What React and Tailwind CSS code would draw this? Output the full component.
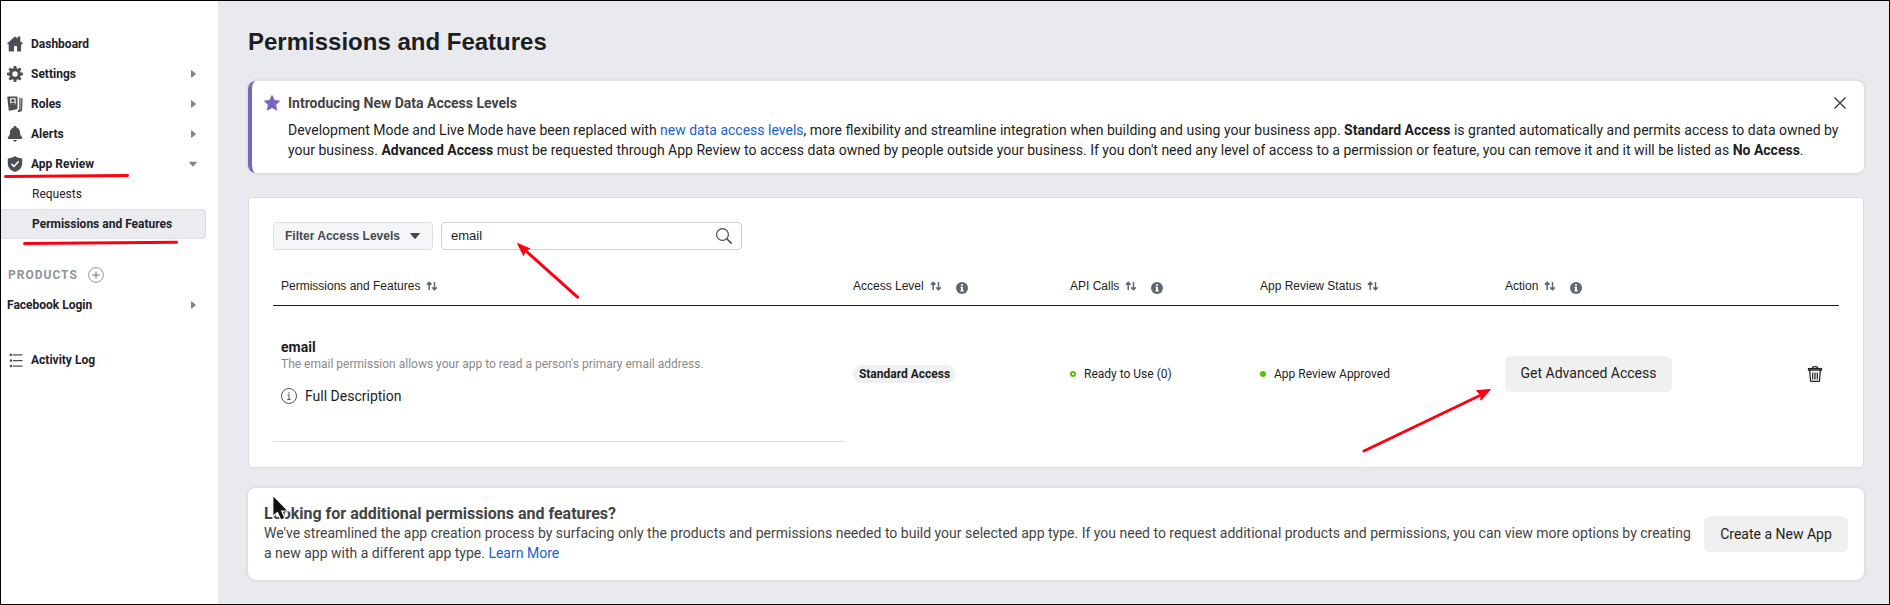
import React from "react";

const roboto = "font-[Roboto,'Liberation_Sans',sans-serif]";
const arial = "font-['Liberation_Sans',Arial,sans-serif]";

function HouseIcon() {
  return (
    <svg className="size-4" viewBox="0 0 16 16" fill="#4b4f56">
      <path d="M.4 7.2 7 1.200c.6-.5 1.300-.5 1.900 0l1.600 1.400V1.200c0-.4.2-.6.6-.6h1.600c.4 0 .6.2.6.6v4l2.300 2.100c.4.4.1.9-.4.9h-1.100v6.600c0 .4-.3.7-.7.7H10V10.500c0-.3-.2-.5-.5-.5h-2c-.3 0-.5.2-.5.5v5H2.400c-.4 0-.7-.3-.7-.7V8.200H.8c-.5 0-.8-.6-.4-1Z" />
    </svg>
  );
}

function GearIcon() {
  const teeth = [0, 45, 90, 135, 180, 225, 270, 315];
  return (
    <svg className="size-4" viewBox="0 0 16 16">
      {teeth.map((a) => (
        <path key={a} d="M6.200 3.500 6.700.3C6.700.1 6.900 0 7.100 0h1.800c.2 0 .4.1.4.3L9.800 3.500Z" fill="#4b4f56" transform={`rotate(${a} 8 8)`} />
      ))}
      <circle cx="8" cy="8" r="4.300" fill="none" stroke="#4b4f56" strokeWidth="3.200" />
    </svg>
  );
}

function RolesIcon() {
  return (
    <svg className="size-4" viewBox="0 0 16 16">
      <path d="M1 .4h8.600c.6 0 .9.3.9.9v11c0 .5-.2.8-.7.9L2.600 14.800c-.6.1-.9-.1-.9-.7L.3 1.300C.2.700.500.400 1 .4Z" fill="#4b4f56" />
      <path d="M3 2.200h5.600v6.400H3.600Z" fill="#fff" />
      <circle cx="5.900" cy="4.600" r="1.700" fill="#4b4f56" />
      <path d="M3.500 8.700c.1-1.600.9-2.300 2.400-2.300s2.500.7 2.600 2.300Z" fill="#4b4f56" />
      <path d="M11.200 14.300h.8c.6 0 .9-.3.900-.8V1.700M14.900 2.300 14.500 13.600c0 .8-.4 1.300-1.200 1.500l-2.600.4" fill="none" stroke="#4b4f56" strokeWidth="1.300" />
    </svg>
  );
}

function BellIcon() {
  return (
    <svg className="size-4" viewBox="0 0 16 16" fill="#4b4f56">
      <path d="M8 0c.8 0 1.300.5 1.300 1.200 2.300.6 3.500 2.400 3.700 4.900.1 2.400.5 3.700 1.900 4.900.8.8.4 1.900-.6 1.900H1.700c-1 0-1.400-1.100-.6-1.900C2.500 9.800 2.900 8.500 3 6.100c.2-2.500 1.400-4.300 3.700-4.900C6.700.5 7.200 0 8 0Z" />
      <path d="M6.200 14h3.600c0 1-.8 1.700-1.800 1.700S6.200 15 6.200 14Z" />
    </svg>
  );
}

function ShieldIcon() {
  return (
    <svg className="size-4" viewBox="0 0 16 16">
      <path d="M8 .2c.3 0 .6.1.9.3 1.600 1 3.300 1.500 5.400 1.800.6.1.9.4.9 1v3.900c0 4.100-2.400 7-6.300 8.500-.6.2-1.200.2-1.800 0C3.200 14.200.8 11.300.8 7.200V3.300c0-.6.3-.9.9-1C3.800 2 5.500 1.500 7.100.5c.3-.2.6-.3.9-.3Z" fill="#4b4f56" />
      <path d="m4.800 8.300 2.100 2.100 4.400-4.600" fill="none" stroke="#fff" strokeWidth="1.500" strokeLinecap="round" strokeLinejoin="round" />
    </svg>
  );
}

function ListIcon() {
  return (
    <svg className="h-[15px] w-4" viewBox="0 0 16 15" fill="#4b4f56">
      <path d="M6 1.300H15.500V2.600H6ZM6 6.900H15.500V8.200H6ZM6 12.400H15.500V13.700H6Z" />
      <path d="M2.800.8h2.300v2.300H2.800ZM2.800 6.400h2.300v2.300H2.800ZM2.800 11.900h2.300v2.300H2.800Z" />
    </svg>
  );
}

function Caret({ open }) {
  return open ? (
    <svg className="h-2 w-2" viewBox="0 0 8 8"><path d="M.8 1.800h6.400c.6 0 .7.6.3 1L4.500 6.200c-.3.3-.7.3-1 0L.5 2.800c-.4-.4-.2-1 .3-1Z" fill="#808489" /></svg>
  ) : (
    <svg className="h-2 w-2" viewBox="0 0 8 8"><path d="M2 .8v6.400c0 .4.500.5.900.3l3.700-2.900c.4-.3.4-.8 0-1.100L2.900.500C2.500.2 2 .3 2 .8Z" fill="#808489" /></svg>
  );
}

function NavItem({ icon, label, caret, open }) {
  return (
    <div className="flex h-[30px] items-center pr-[21px] pl-1.5">
      {icon && <span className="mr-2 flex w-4 shrink-0">{icon}</span>}
      <span className="flex-1 text-xs font-bold text-[#1d2129]">{label}</span>
      {caret && <Caret open={open} />}
    </div>
  );
}

function SortIcon() {
  return (
    <svg className="h-2.5 w-3" viewBox="0 0 12 10" fill="none" stroke="#606770" strokeWidth="1.500">
      <path d="M3.200 9V1.500M.9 3.600l2.300-2.300 2.300 2.300M8.500 1v7.500M6.200 6.400l2.300 2.300 2.300-2.300" />
    </svg>
  );
}

function InfoIcon() {
  return (
    <svg className="size-3" viewBox="0 0 12 12">
      <circle cx="6" cy="6" r="6" fill="#606770" />
      <path d="M5 2.200h2v1.500H5ZM4.400 4.700H7V8.300h.7v1.100H4.400V8.300H5V5.700h-.6Z" fill="#fff" />
    </svg>
  );
}

function Header({ label, info }) {
  return (
    <div className="flex items-center">
      <span>{label}</span>
      <span className="ml-1.5"><SortIcon /></span>
      {info && <span className="mt-1 ml-3.5"><InfoIcon /></span>}
    </div>
  );
}

const columns = "grid grid-cols-[572px_217px_190px_245px_1fr] pl-2";

export default function App() {
  return (
    <div className={`relative flex h-[605px] w-[1890px] overflow-hidden border border-black bg-[#e9eaee] ${roboto}`}>
      <aside className="w-[217px] shrink-0 bg-white pt-7">
        <NavItem icon={<HouseIcon />} label="Dashboard" />
        <NavItem icon={<GearIcon />} label="Settings" caret />
        <NavItem icon={<RolesIcon />} label="Roles" caret />
        <NavItem icon={<BellIcon />} label="Alerts" caret />
        <NavItem icon={<ShieldIcon />} label="App Review" caret open />
        <div className="flex h-[30px] items-center pl-[31px] text-xs text-[#1d2129]">Requests</div>
        <div className="flex h-[30px] w-[205px] items-center rounded-r-sm border border-l-0 border-[#dadde1] bg-[#ebecf0] pl-[31px] text-xs font-bold text-[#1d2129]">
          Permissions and Features
        </div>
        <div className="mt-[22px] flex h-[28px] items-center pl-[7px]">
          <span className="w-20 text-xs font-bold tracking-[1px] text-[#90949c]">PRODUCTS</span>
          <svg className="size-4" viewBox="0 0 16 16" fill="none" stroke="#90949c">
            <circle cx="8" cy="8" r="7.400" />
            <path d="M8 4.500v7M4.500 8h7" strokeWidth="1.400" />
          </svg>
        </div>
        <div className="mt-[1px]"><NavItem label="Facebook Login" caret /></div>
        <div className="mt-[25px]"><NavItem icon={<ListIcon />} label="Activity Log" /></div>
      </aside>

      <main className="flex-1 pr-[25px] pl-[30px]">
        <h1 className={`mt-[25px] h-[55px] text-2xl leading-8 font-bold text-[#1c1e21] ${arial}`}>Permissions and Features</h1>

        <section className="flex h-[92px] rounded-lg border-l-4 border-[#7b64c0] bg-white pl-3 shadow-[0_0_4px_rgba(0,0,0,0.12)]">
          <svg className="mt-3.5 size-4 shrink-0" viewBox="0 0 16 16" fill="#7b64c0" stroke="#7b64c0" strokeWidth="1.200" strokeLinejoin="round">
            <path d="m8 .8 2.100 4.700 5.200.6-3.900 3.400 1.100 5.300L8 12.200l-4.500 2.600 1.100-5.300L.7 6.100l5.200-.6Z" />
          </svg>
          <div className="ml-2 flex-1 pt-3 text-sm leading-5 text-[#1c1e21]">
            <div className="flex h-[27px]">
              <h2 className="flex-1 font-bold text-[#444]">Introducing New Data Access Levels</h2>
              <svg className="mt-1 mr-[18px] size-3" viewBox="0 0 12 12" stroke="#333" strokeWidth="1.300"><path d="m.5.5 11 11M11.500.5l-11 11" /></svg>
            </div>
            <p className="whitespace-nowrap">
              Development Mode and Live Mode have been replaced with <a className="text-[#1763cf]">new data access levels</a>, more flexibility and streamline integration when building and using your business app. <b>Standard Access</b> is granted automatically and permits access to data owned by
            </p>
            <p className="whitespace-nowrap">
              your business. <b>Advanced Access</b> must be requested through App Review to access data owned by people outside your business. If you don't need any level of access to a permission or feature, you can remove it and it will be listed as <b>No Access</b>.
            </p>
          </div>
        </section>

        <section className="mt-6 h-[271px] rounded border border-[#dadde1] bg-white px-6 pt-6">
          <div className="flex gap-2">
            <button className={`flex h-7 w-40 items-center rounded-sm border border-[#dadde1] bg-[#f5f6f7] pl-[11px] text-xs font-bold text-[#444950] ${arial}`}>
              <span className="w-[125px] text-left">Filter Access Levels</span>
              <svg className="h-2 w-2.5" viewBox="0 0 10 8"><path d="M1 1h8c.7 0 .9.6.5 1.100L5.700 6.600c-.4.5-1 .5-1.400 0L.5 2.100C.1 1.600.3 1 1 1Z" fill="#444950" /></svg>
            </button>
            <div className={`flex h-7 w-[301px] items-center rounded border border-[#ccd0d5] bg-white px-[9px] text-[13px] text-[#1c1e21] ${arial}`}>
              <span className="flex-1">email</span>
              <svg className="size-4" viewBox="0 0 16 16" fill="none" stroke="#444950" strokeWidth="1.200"><circle cx="6.500" cy="6.500" r="5.900" /><path d="m10.800 10.800 4.800 4.800" strokeWidth="1.600" /></svg>
            </div>
          </div>

          <div className={`${columns} mt-[17px] h-[39px] items-center border-b border-[#1c1e21] text-xs text-[#1c1e21] ${arial}`}>
            <Header label="Permissions and Features" />
            <Header label="Access Level" info />
            <Header label="API Calls" info />
            <Header label="App Review Status" />
            <Header label="Action" info />
          </div>

          <div className={`${columns} h-[135px] items-center text-xs text-[#1c1e21]`}>
            <div className="pb-1">
              <div className="text-sm leading-4 font-bold">email</div>
              <div className="mt-px text-xs leading-4 text-[#8a8a8a]">The email permission allows your app to read a person's primary email address.</div>
              <div className="mt-4 flex items-center gap-2 text-sm leading-4">
                <svg className="size-4" viewBox="0 0 16 16" fill="none" stroke="#555"><circle cx="8" cy="8" r="7.500" /><path d="M6.500 6.700H8v4.500M6.300 11.500h3.400M8 4v1.300" /></svg>
                Full Description
              </div>
            </div>
            <div><span className="inline-flex h-[18px] w-[103px] items-center justify-center rounded-full bg-[#f0f0f0] font-bold">Standard Access</span></div>
            <div className="flex items-center gap-2"><i className="size-1.5 rounded-full border-2 border-[#5dbb0a]" />Ready to Use (0)</div>
            <div className="flex items-center gap-2"><i className="size-1.5 rounded-full bg-[#5dbb0a]" />App Review Approved</div>
            <div className="flex items-center justify-between">
              <button className="flex h-9 w-[167px] items-center justify-center rounded-md bg-[#f0f0f0] pb-px text-sm">Get Advanced Access</button>
              <svg className="mr-4 size-4" viewBox="0 0 16 16" fill="none" stroke="#1c1e21" strokeWidth="1.200">
                <path d="M1.500 2.600h13v1.600h-13ZM5.200 2.400C5.200 1 6 .6 8 .6s2.800.4 2.800 1.800M2.700 4.500l.8 10c0 .6.4.9.9.9h7.200c.5 0 .9-.3.9-.9l.8-10M5.700 6.500v7M8 6.500v7M10.300 6.500v7" />
              </svg>
            </div>
          </div>
          <div className="h-px w-[572px] bg-[#dadde1]" />
        </section>

        <section className="mt-5 flex h-[92px] items-center rounded-lg bg-white px-4 text-sm leading-5 text-[#444] shadow-[0_0_4px_rgba(0,0,0,0.12)]">
          <div className="flex-1">
            <h2 className="text-base leading-5 font-bold">Looking for additional permissions and features?</h2>
            <div className="-mt-px pb-px">
              <p className="whitespace-nowrap">We've streamlined the app creation process by surfacing only the products and permissions needed to build your selected app type. If you need to request additional products and permissions, you can view more options by creating</p>
              <p className="whitespace-nowrap">a new app with a different app type. <a className="text-[#1763cf]">Learn More</a></p>
            </div>
          </div>
          <button className="flex h-9 w-36 shrink-0 items-center justify-center rounded-md bg-[#f0f0f0] pb-px text-[#1c1e21]">Create a New App</button>
        </section>
      </main>

      <svg className="pointer-events-none absolute -top-px -left-px h-[605px] w-[1890px]" viewBox="0 0 1890 605" fill="#ff0013" stroke="#ff0013">
        <path d="M5.500 176.500 127.500 175.500M24.500 243.500 176.500 242.200" strokeWidth="3" strokeLinecap="round" />
        <path d="M577.500 297.200 525.500 250.500M1364 451 1482 394.500" strokeWidth="3" strokeLinecap="round" />
        <path d="m517.500 243.500 12.500 5.200-4.700 1.600-1.700 5.200ZM1490.500 389.500l-14 1.100 4.500 4.400-.2 5.200Z" strokeWidth="1" />
        <path d="M272.800 495v21.500l4.700-4 3.300 7.500 4.200-1.800-3.300-7.200h6.600Z" fill="#111" stroke="#fff" strokeWidth="1.200" />
      </svg>
    </div>
  );
}
